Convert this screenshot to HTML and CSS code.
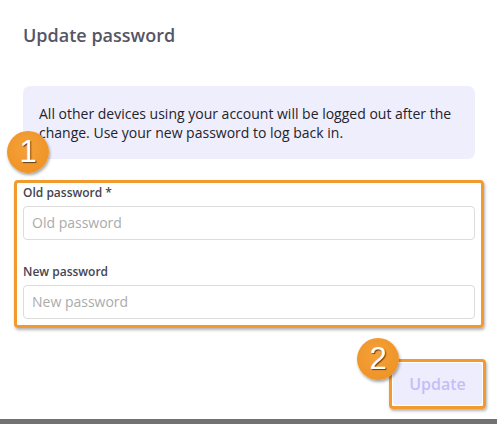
FILE: index.html
```html
<!DOCTYPE html>
<html>
<head>
<meta charset="utf-8">
<link rel="stylesheet" href="styles.css">
</head>
<body>
<div class="dialog">
  <h2 class="title">Update password</h2>
  <div class="info">All other devices using your account will be logged out after the change. Use your new password to log back in.</div>
  <div class="form-wrap">
    <span class="badge badge-1">1</span>
    <div class="form">
      <label class="label">Old password *</label>
      <div class="input">Old password</div>
      <label class="label label-second">New password</label>
      <div class="input">New password</div>
    </div>
  </div>
  <div class="actions">
    <div class="btn-wrap">
      <span class="badge badge-2">2</span>
      <div class="btn-hl">
        <button class="btn">Update</button>
      </div>
    </div>
  </div>
</div>
<div class="overlay-strip"></div>
</body>
</html>
```

FILE: styles.css
```css
html, body {
  margin: 0;
  padding: 0;
}
body {
  width: 497px;
  height: 424px;
  overflow: hidden;
  background: #ffffff;
  font-family: "Open Sans", "Liberation Sans", sans-serif;
}
.dialog {
  box-sizing: border-box;
  width: 495px;
  height: 419px;
  padding: 23px 20px 0 23px;
  background: #ffffff;
  display: flex;
  flex-direction: column;
}
.overlay-strip {
  height: 5px;
  background: #727272;
}
.title {
  margin: 0;
  font-size: 18px;
  line-height: 24px;
  font-weight: 600;
  color: #555566;
}
.info {
  margin-top: 39px;
  background: #efeefd;
  border-radius: 7px;
  padding: 18px 16px 17px 16px;
  font-size: 14px;
  line-height: 19px;
  color: #23232b;
}
.form-wrap {
  position: relative;
  margin: 21px -9px 0 -9px;
}
.form {
  border: 3px solid #f29a2e;
  border-radius: 4px;
  box-shadow: 1px 2px 3px rgba(0,0,0,0.3);
  padding: 2px 6px 6px 6px;
  display: flex;
  flex-direction: column;
}
.label {
  font-size: 12px;
  line-height: 16px;
  font-weight: 600;
  color: #454552;
}
.label-second {
  margin-top: 24px;
}
.input {
  margin-top: 5px;
  box-sizing: border-box;
  height: 34px;
  border: 1px solid #dcdcdc;
  border-radius: 4px;
  padding: 0 8px;
  font-size: 14px;
  line-height: 32px;
  color: #ababab;
}
.actions {
  display: flex;
  justify-content: flex-end;
  margin-top: 31px;
  margin-right: -11px;
}
.btn-wrap {
  position: relative;
}
.btn-hl {
  border: 3px solid #f29a2e;
  border-radius: 4px;
  box-shadow: 1px 2px 3px rgba(0,0,0,0.3);
  padding: 1px;
  width: 89px;
}
.btn {
  display: block;
  width: 89px;
  height: 42px;
  border: none;
  border-radius: 3px;
  background: #eeedfd;
  color: #c3bff5;
  font-family: "Open Sans", "Liberation Sans", sans-serif;
  font-size: 16px;
  font-weight: 600;
  padding: 0;
}
.badge {
  position: absolute;
  width: 42px;
  height: 42px;
  border-radius: 50%;
  background: radial-gradient(circle at 45% 40%, #f4a23a 0%, #ef9428 70%, #e58a20 100%);
  box-shadow: 1px 2px 3px rgba(0,0,0,0.35);
  color: #ffffff;
  font-family: "Liberation Sans", "DejaVu Sans", sans-serif;
  font-size: 31px;
  line-height: 42px;
  text-align: center;
  text-shadow: 1px 1px 1px rgba(0,0,0,0.6);
  z-index: 2;
}
.badge-1 {
  left: -7px;
  top: -49px;
}
.badge-2 {
  left: -32px;
  top: -21px;
}
```
